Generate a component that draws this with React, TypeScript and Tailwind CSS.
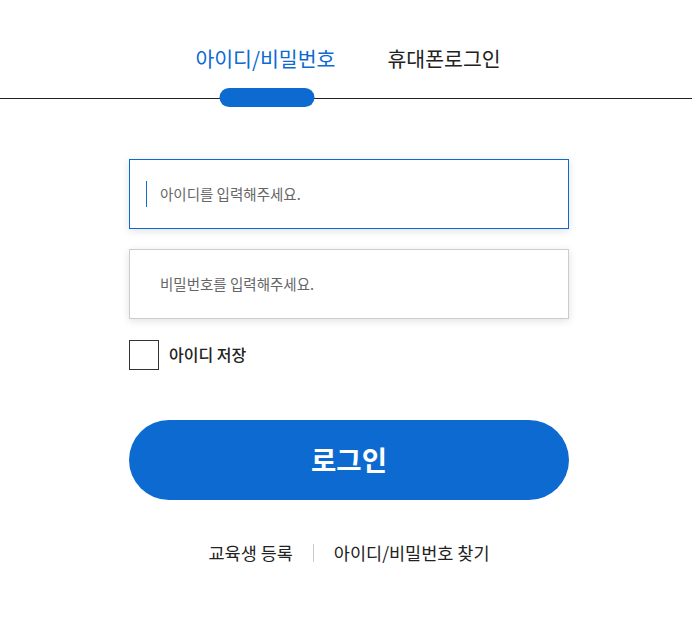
import { useState } from 'react';

const font = "font-['Noto_Sans_CJK_KR','Noto_Sans',sans-serif]";

export default function App() {
  const [tab, setTab] = useState(0);
  const [saveId, setSaveId] = useState(false);

  const tabs = ['아이디/비밀번호', '휴대폰로그인'];

  return (
    <div className={`min-h-screen w-[692px] bg-white text-[#222] ${font}`}>
      {/* Tabs */}
      <div className="flex justify-center gap-[52px] border-b border-[#222] pl-[4px] pt-[44px]">
        {tabs.map((label, i) => (
          <button
            key={label}
            onClick={() => setTab(i)}
            className={`relative pb-[26px] text-[20.5px] leading-[28px] ${
              tab === i ? 'text-[#0d6ad0]' : 'text-[#222]'
            }`}
          >
            {label}
            {tab === i && (
              <span className="absolute bottom-[-9px] left-[calc(50%+2px)] h-[19px] w-[95px] -translate-x-1/2 rounded-full bg-[#0d6ad0]" />
            )}
          </button>
        ))}
      </div>

      <div className="ml-[129px] w-[440px] pt-[60px]">
        {/* ID input */}
        <div className="flex h-[70px] items-center border border-[#0d6ad0] bg-white pl-[16px] shadow-[0_2px_8px_rgba(0,0,0,0.12)]">
          <span className="h-[26px] w-px bg-[#0d6ad0]" />
          <span className="ml-[13px] text-[14.5px] text-[#666]">아이디를 입력해주세요.</span>
        </div>

        {/* Password input */}
        <div className="mt-[20px] flex h-[70px] items-center border border-[#ccc] bg-white pl-[30px] shadow-[0_2px_8px_rgba(0,0,0,0.12)]">
          <span className="text-[14.5px] text-[#666]">비밀번호를 입력해주세요.</span>
        </div>

        {/* Save ID */}
        <label className="mt-[21px] flex cursor-pointer items-center">
          <span
            onClick={() => setSaveId(!saveId)}
            className={`h-[30px] w-[30px] border border-[#333] ${saveId ? 'bg-[#0d6ad0]' : 'bg-white'}`}
          />
          <span className="mb-[3px] ml-[10px] text-[16px] font-medium leading-[24px] text-[#222]">아이디 저장</span>
        </label>

        {/* Login button */}
        <button className="mt-[50px] flex h-[80px] w-full items-center justify-center rounded-full bg-[#0d6ad0] text-[27.5px] font-bold text-white">
          로그인
        </button>

        {/* Links */}
        <div className="mt-[40px] flex items-center justify-center text-[17.5px] leading-[26px] text-[#222]">
          <a href="#">교육생 등록</a>
          <span className="mx-[20px] h-[18px] w-px bg-[#ccc]" />
          <a href="#">아이디/비밀번호 찾기</a>
        </div>
      </div>
    </div>
  );
}
